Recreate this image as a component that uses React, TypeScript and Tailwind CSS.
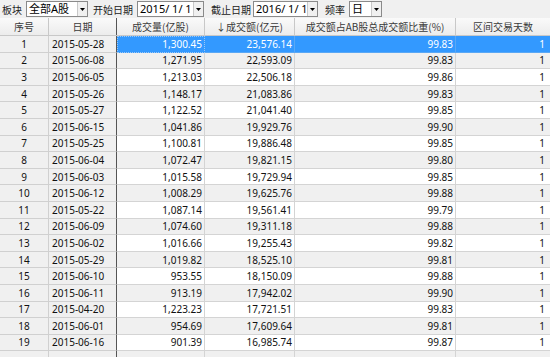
import React from "react";

const rows: [string, string, string, string, string, string][] = [
  ["1", "2015-05-28", "1,300.45", "23,576.14", "99.83", "1"],
  ["2", "2015-06-08", "1,271.95", "22,593.09", "99.83", "1"],
  ["3", "2015-06-05", "1,213.03", "22,506.18", "99.86", "1"],
  ["4", "2015-05-26", "1,148.17", "21,083.86", "99.83", "1"],
  ["5", "2015-05-27", "1,122.52", "21,041.40", "99.85", "1"],
  ["6", "2015-06-15", "1,041.86", "19,929.76", "99.90", "1"],
  ["7", "2015-05-25", "1,100.81", "19,886.48", "99.85", "1"],
  ["8", "2015-06-04", "1,072.47", "19,821.15", "99.80", "1"],
  ["9", "2015-06-03", "1,015.58", "19,729.94", "99.85", "1"],
  ["10", "2015-06-12", "1,008.29", "19,625.76", "99.88", "1"],
  ["11", "2015-05-22", "1,087.14", "19,561.41", "99.79", "1"],
  ["12", "2015-06-09", "1,074.60", "19,311.18", "99.88", "1"],
  ["13", "2015-06-02", "1,016.66", "19,255.43", "99.82", "1"],
  ["14", "2015-05-29", "1,019.82", "18,525.10", "99.81", "1"],
  ["15", "2015-06-10", "953.55", "18,150.09", "99.88", "1"],
  ["16", "2015-06-11", "913.19", "17,942.02", "99.90", "1"],
  ["17", "2015-04-20", "1,223.23", "17,721.51", "99.83", "1"],
  ["18", "2015-06-01", "954.69", "17,609.64", "99.81", "1"],
  ["19", "2015-06-16", "901.39", "16,985.74", "99.87", "1"],
  ["", "", "", "", "", ""],
];

const cjk = "font-['Noto_Sans_CJK_SC','Noto_Sans',sans-serif]";
const num = "font-['Noto_Sans','Noto_Sans_CJK_SC',sans-serif]";

function Arrow() {
  return (
    <div className="flex h-full w-[10px] items-center justify-center border-l border-[#c8c8c8] bg-[#f0f0f0]">
      <svg width="5" height="3" viewBox="0 0 5 3">
        <polygon points="0,0 5,0 2.5,3" fill="#000" />
      </svg>
    </div>
  );
}

function Combo({ text, w }: { text: string; w: string }) {
  return (
    <div className={`flex h-[16px] items-stretch border border-[#8a8a8a] bg-white ${w}`}>
      <div className={`flex-1 overflow-hidden whitespace-pre pl-[2px] text-[11px] leading-[14px] text-black ${num}`}>{text}</div>
      <Arrow />
    </div>
  );
}

export default function App() {
  return (
    <div className="h-[357px] w-[550px] overflow-hidden bg-white">
      {/* toolbar */}
      <div className={`flex h-[18px] items-center bg-[#f0f0f0] text-[10px] text-[#222] ${cjk}`}>
        <span className="ml-[2px] w-[24px]">板块</span>
        <Combo text="全部A股" w="w-[62px]" />
        <span className="ml-[5px] w-[44px]">开始日期</span>
        <Combo text="2015/ 1/ 1" w="w-[67px]" />
        <span className="ml-[7px] w-[42px]">截止日期</span>
        <Combo text="2016/ 1/ 1" w="w-[65px]" />
        <span className="ml-[7px] w-[24px]">频率</span>
        <Combo text="日" w="w-[33px]" />
      </div>
      {/* header */}
      <div
        className={`flex h-[18px] border-b border-[#c8c8c8] bg-gradient-to-b from-[#fafafa] to-[#ececec] text-[10px] text-[#3a3a3a] ${cjk}`}
      >
        <div className="flex w-[49px] items-center justify-center border-r border-[#c8c8c8]">序号</div>
        <div className="flex w-[68px] items-center justify-center border-r border-[#555]">日期</div>
        <div className="flex w-[88px] items-center justify-center border-r border-[#c8c8c8]">成交量(亿股)</div>
        <div className="flex w-[90px] items-center justify-center border-r border-[#c8c8c8]">↓成交额(亿元)</div>
        <div className="flex w-[161px] items-center justify-center border-r border-[#c8c8c8]">成交额占AB股总成交额比重(%)</div>
        <div className="flex flex-1 items-center justify-center">区间交易天数</div>
      </div>
      {rows.map((r, i) => {
        const sel = i === 0;
        const even = i % 2 === 1;
        const dataBg = sel ? "bg-[#3399ff] text-white" : even ? "bg-[#f0f0f0] text-[#111]" : "bg-white text-[#111]";
        const line = sel ? "border-[#5aa8f5]" : "border-[#d4d4d4]";
        return (
          <div key={i} className={`flex h-[16.6px] text-[10px] leading-none ${num}`}>
            <div className="flex w-[49px] items-center justify-center border-r border-b border-[#d0d0d0] bg-[#f0f0f0] text-[#111]">
              {r[0]}
            </div>
            <div className="flex w-[68px] items-center border-r border-b border-r-[#555] border-b-[#d0d0d0] bg-[#f0f0f0] pl-[3px] text-[#111]">
              {r[1]}
            </div>
            <div
              className={`flex w-[88px] items-center justify-end border-r border-b pr-[2px] ${dataBg} ${line} ${
                sel ? "border border-dotted border-[#9cc8f5]" : ""
              }`}
            >
              {r[2]}
            </div>
            <div className={`flex w-[90px] items-center justify-end border-r border-b pr-[2px] ${dataBg} ${line}`}>
              {r[3]}
            </div>
            <div className={`flex w-[161px] items-center justify-end border-r border-b pr-[2px] ${dataBg} ${line}`}>
              {r[4]}
            </div>
            <div className={`flex flex-1 items-center justify-end border-b pr-[5px] ${dataBg} ${line}`}>{r[5]}</div>
          </div>
        );
      })}
    </div>
  );
}
